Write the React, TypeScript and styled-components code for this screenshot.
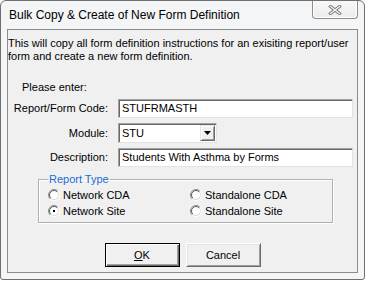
import React from 'react';
import styled, { createGlobalStyle } from 'styled-components';

const GlobalStyle = createGlobalStyle`
  html, body {
    margin: 0;
    padding: 0;
    background: #ffffff;
  }
  body {
    font-family: "Liberation Sans", Arial, sans-serif;
    font-size: 11px;
    color: #000;
  }
`;

const Window = styled.div`
  width: 365px;
  height: 280px;
  box-sizing: border-box;
  border: 1px solid #6f6f6f;
  border-radius: 6px 6px 3px 3px;
  background: #f4f5f6;
  padding: 0 6px 6px 6px;
  display: flex;
  flex-direction: column;
`;

const TitleBar = styled.div`
  height: 28px;
  display: flex;
  align-items: flex-start;
  justify-content: space-between;
  flex-shrink: 0;
`;

const Title = styled.div`
  font-size: 12px;
  line-height: 16px;
  margin: 6px 0 0 2px;
  color: #000;
`;

const CloseButton = styled.div`
  width: 46px;
  height: 18px;
  box-sizing: border-box;
  border: 1px solid #8d8d8d;
  border-top: none;
  border-radius: 0 0 4px 4px;
  background: linear-gradient(#f8f8f8, #ececec);
  display: flex;
  align-items: center;
  justify-content: center;
  box-shadow: inset 1px 0 #ffffff, inset -1px -1px #ffffff;
`;

const Client = styled.div`
  flex: 1;
  border: 1px solid #8c8c8c;
  background: #f0f0f0;
  display: flex;
  flex-direction: column;
`;

const Intro = styled.p`
  margin: 7px 0 0 0;
  line-height: 13px;
`;

const Prompt = styled.div`
  margin: 18px 0 0 14px;
  line-height: 13px;
`;

const FormGrid = styled.div`
  display: grid;
  grid-template-columns: 100px 235px;
  column-gap: 10px;
  row-gap: 5px;
  margin-top: 5px;
  align-items: center;
`;

const Label = styled.label`
  text-align: right;
  line-height: 13px;
`;

const sunken = `
  box-sizing: border-box;
  border: 1px solid;
  border-color: #a0a0a0 #e3e3e3 #e3e3e3 #a0a0a0;
  box-shadow: inset 1px 1px #696969;
  background: #ffffff;
`;

const TextBox = styled.div`
  ${sunken}
  height: 19px;
  padding: 2px 0 0 3px;
  line-height: 13px;
`;

const Combo = styled.div`
  ${sunken}
  width: 99px;
  height: 20px;
  display: flex;
  align-items: stretch;
  padding: 1px 1px 0 1px;
`;

const ComboText = styled.div`
  flex: 1;
  padding: 2px 0 0 2px;
  line-height: 13px;
`;

const ComboButton = styled.div`
  width: 15px;
  box-sizing: border-box;
  background: #f0f0f0;
  border: 1px solid;
  border-color: #e3e3e3 #696969 #696969 #e3e3e3;
  box-shadow: inset 1px 1px #ffffff, inset -1px -1px #a0a0a0;
  display: flex;
  align-items: center;
  justify-content: center;
  margin-bottom: 1px;
`;

const GroupBox = styled.fieldset`
  margin: 6px 24px 0 30px;
  padding: 0 8px 3px 9px;
  border: 1px solid #b0b0b0;
  box-shadow: inset 1px 1px #ffffff, 1px 1px #ffffff;
  min-width: 0;
`;

const Legend = styled.legend`
  color: #1a6bd6;
  padding: 0 1px;
  line-height: 13px;
`;

const RadioGrid = styled.div`
  display: grid;
  grid-template-columns: 142px 1fr;
  grid-auto-rows: 16px;
  margin-top: 1px;
`;

const RadioItem = styled.div`
  display: flex;
  align-items: center;
  gap: 3px;
  line-height: 13px;
`;

const ButtonRow = styled.div`
  display: flex;
  justify-content: center;
  gap: 6px;
  margin-top: 20px;
`;

const Button = styled.button<{ $default?: boolean }>`
  width: 75px;
  height: 24px;
  box-sizing: border-box;
  font-family: "Liberation Sans", Arial, sans-serif;
  font-size: 11px;
  color: #000;
  background: #f0f0f0;
  padding: 0;
  border: 1px solid;
  border-color: ${p => (p.$default ? '#000000' : '#ffffff #696969 #696969 #ffffff')};
  box-shadow: ${p =>
    p.$default
      ? 'inset 1px 1px #ffffff, inset -1px -1px #696969, inset -2px -2px #a0a0a0'
      : 'inset 1px 1px #e3e3e3, inset -1px -1px #a0a0a0'};
`;

function CloseGlyph() {
  return (
    <svg width="14" height="10" viewBox="0 0 14 10">
      <path d="M2.5 1.5 L11.5 8.5 M11.5 1.5 L2.5 8.5" stroke="#7a7a7a" strokeWidth="3.2" strokeLinecap="square" fill="none" />
      <path d="M2.5 1.5 L11.5 8.5 M11.5 1.5 L2.5 8.5" stroke="#f4f4f4" strokeWidth="1.3" strokeLinecap="square" fill="none" />
    </svg>
  );
}

function Arrow() {
  return (
    <svg width="7" height="4" viewBox="0 0 7 4">
      <path d="M0 0 H7 L3.5 4 Z" fill="#000" />
    </svg>
  );
}

function RadioMark({ checked, id }: { checked?: boolean; id: string }) {
  return (
    <svg width="12" height="12" viewBox="0 0 12 12">
      <defs>
        <linearGradient id={`o${id}`} x1="0" y1="0" x2="1" y2="1">
          <stop offset="0.45" stopColor="#8a8a8a" />
          <stop offset="0.55" stopColor="#ffffff" />
        </linearGradient>
        <linearGradient id={`i${id}`} x1="0" y1="0" x2="1" y2="1">
          <stop offset="0.45" stopColor="#5a5a5a" />
          <stop offset="0.55" stopColor="#dcdcdc" />
        </linearGradient>
      </defs>
      <circle cx="6" cy="6" r="5.5" fill="none" stroke={`url(#o${id})`} strokeWidth="1" />
      <circle cx="6" cy="6" r="4.5" fill="#ffffff" stroke={`url(#i${id})`} strokeWidth="1" />
      {checked && <rect x="5" y="5" width="2" height="2" fill="#000" />}
    </svg>
  );
}

const radios = [
  { label: 'Network CDA', checked: false },
  { label: 'Standalone CDA', checked: false },
  { label: 'Network Site', checked: true },
  { label: 'Standalone Site', checked: false },
];

export default function App() {
  return (
    <>
      <GlobalStyle />
      <Window>
        <TitleBar>
          <Title>Bulk Copy &amp; Create of New Form Definition</Title>
          <CloseButton>
            <CloseGlyph />
          </CloseButton>
        </TitleBar>
        <Client>
          <Intro>
            This will copy all form definition instructions for an exisiting report/user
            <br />
            form and create a new form definition.
          </Intro>
          <Prompt>Please enter:</Prompt>
          <FormGrid>
            <Label>Report/Form Code:</Label>
            <TextBox>STUFRMASTH</TextBox>
            <Label>Module:</Label>
            <Combo>
              <ComboText>STU</ComboText>
              <ComboButton>
                <Arrow />
              </ComboButton>
            </Combo>
            <Label>Description:</Label>
            <TextBox>Students With Asthma by Forms</TextBox>
          </FormGrid>
          <GroupBox>
            <Legend>Report Type</Legend>
            <RadioGrid>
              {radios.map((r, i) => (
                <RadioItem key={r.label}>
                  <RadioMark checked={r.checked} id={String(i)} />
                  <span>{r.label}</span>
                </RadioItem>
              ))}
            </RadioGrid>
          </GroupBox>
          <ButtonRow>
            <Button $default>
              <u>O</u>K
            </Button>
            <Button>Cancel</Button>
          </ButtonRow>
        </Client>
      </Window>
    </>
  );
}
